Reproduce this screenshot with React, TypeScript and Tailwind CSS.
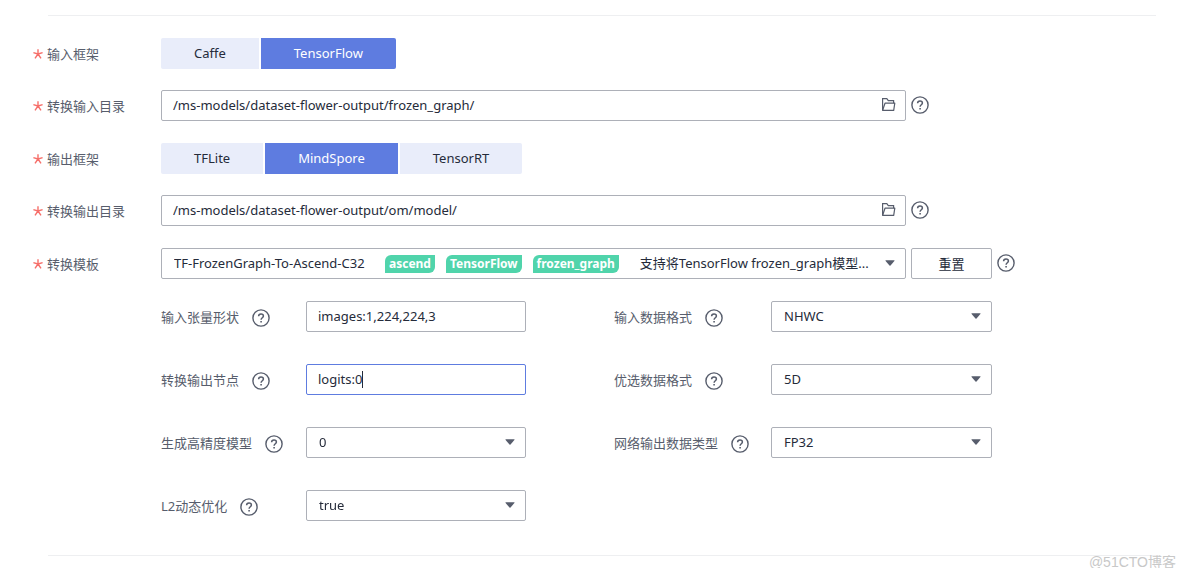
import { useState } from "react";
import type { ReactNode } from "react";

const fieldClass =
  "block h-[31px] w-full rounded-xs border border-[#adb0b8] bg-white pb-[2px] text-[13px] leading-5 text-[#252b3a] outline-none focus:border-[#5e7ce0]";

function HelpButton({ label, className }: { label: string; className: string }) {
  return (
    <button
      type="button"
      aria-label={`${label} help`}
      className={`block h-[18px] w-[18px] shrink-0 ${className}`}
    >
      <svg viewBox="0 0 18 18" className="h-[18px] w-[18px]" fill="none" stroke="#575d6c">
        <circle cx="9" cy="9" r="8.1" strokeWidth="1.4" />
        <path d="M6.6 7.3c0-1.5 1-2.4 2.4-2.4s2.4.9 2.4 2.1c0 1.7-2.3 1.8-2.3 3.7" strokeWidth="1.5" />
        <path d="M8.3 12.7h1.6" strokeWidth="1.6" />
      </svg>
    </button>
  );
}

function FolderIcon() {
  return (
    <svg viewBox="0 0 15 15" className="h-[15px] w-[15px]" fill="none" stroke="#575d6c" strokeWidth="1.2">
      <path d="M1.6 13.3V1.6h4.2l1.5 2h5.3v2.6" />
      <path d="M1.6 13.3 4 6.2h9.8l-1.1 7.1H1.6z" strokeLinejoin="round" />
    </svg>
  );
}

function Caret() {
  return (
    <svg
      viewBox="0 0 10 6"
      className="pointer-events-none absolute top-3 right-[11px] h-[6px] w-[10px]"
      fill="#575d6c"
    >
      <path d="M.8.3h8.4q.6.1.2.6L5.5 5.5q-.5.5-1 0L.6.9Q.2.4.8.3z" />
    </svg>
  );
}

interface RequiredRowProps {
  label: string;
  htmlFor?: string;
  className: string;
  children: ReactNode;
}

function RequiredRow({ label, htmlFor, className, children }: RequiredRowProps) {
  return (
    <div
      className={`grid grid-cols-[123px_minmax(0,1fr)_81px_18px] items-center gap-x-[5px] ${className}`}
    >
      <label htmlFor={htmlFor} className="flex items-center gap-1 text-[#575d6c]">
        <svg viewBox="0 0 10 10" className="h-[10px] w-[10px]" stroke="#f66f6a" strokeWidth="1.4">
          <path d="M5 .3V5M.4 3.7 5 5M9.6 3.7 5 5M2 9.4 5 5M8 9.4 5 5" />
        </svg>
        {label}
      </label>
      {children}
    </div>
  );
}

interface SegmentedProps {
  label: string;
  options: string[];
  initial: string;
}

function Segmented({ label, options, initial }: SegmentedProps) {
  const [value, setValue] = useState(initial);

  return (
    <RequiredRow label={label} className="mb-[21px]">
      <div role="group" aria-label={label} className="flex gap-[2px]">
        {options.map((option) => (
          <button
            key={option}
            type="button"
            aria-pressed={option === value}
            onClick={() => setValue(option)}
            className={`h-[31px] px-[33px] pb-[2px] first:rounded-l-xs last:rounded-r-xs ${
              option === value ? "bg-[#5e7ce0] text-white" : "bg-[#e9edfa] text-[#252b3a]"
            }`}
          >
            {option}
          </button>
        ))}
      </div>
    </RequiredRow>
  );
}

function DirectoryField({ id, label, path }: { id: string; label: string; path: string }) {
  return (
    <RequiredRow label={label} htmlFor={id} className="mb-[22px]">
      <div className="relative">
        <input id={id} type="text" defaultValue={path} className={`${fieldClass} px-[11px]`} />
        <button type="button" aria-label="Browse" className="absolute top-[7px] right-[10px]">
          <FolderIcon />
        </button>
      </div>
      <HelpButton label={label} className="mb-[2px]" />
    </RequiredRow>
  );
}

const tags = ["ascend", "TensorFlow", "frozen_graph"];

function TemplateField() {
  return (
    <RequiredRow label="转换模板" htmlFor="template" className="mb-[22px]">
      <div className="relative">
        <select id="template" className={`${fieldClass} appearance-none px-3`}>
          <option>TF-FrozenGraph-To-Ascend-C32</option>
        </select>
        <div className="pointer-events-none absolute inset-y-0 right-8 left-56 flex items-center">
          <div className="flex gap-[11px] text-xs">
            {tags.map((tag) => (
              <span
                key={tag}
                className="rounded-tl-md rounded-br-md bg-[#50d4ab] px-1 leading-[18px] font-bold text-white"
              >
                {tag}
              </span>
            ))}
          </div>
          <span className="ml-[21px] pb-[2px] whitespace-nowrap text-[#252b3a]">
            支持将TensorFlow frozen_graph模型...
          </span>
        </div>
        <Caret />
      </div>
      <button
        type="button"
        className="h-[31px] rounded-xs border border-[#adb0b8] bg-white text-[#252b3a]"
      >
        重置
      </button>
      <HelpButton label="转换模板" className="mb-[2px]" />
    </RequiredRow>
  );
}

interface Param {
  id: string;
  label: string;
  value: string;
  type: "text" | "select";
  focused?: boolean;
}

const leftParams: Param[] = [
  { id: "input-shape", label: "输入张量形状", value: "images:1,224,224,3", type: "text" },
  { id: "output-nodes", label: "转换输出节点", value: "logits:0", type: "text", focused: true },
  { id: "high-precision", label: "生成高精度模型", value: "0", type: "select" },
  { id: "l2-optimize", label: "L2动态优化", value: "true", type: "select" },
];

const rightParams: Param[] = [
  { id: "input-format", label: "输入数据格式", value: "NHWC", type: "select" },
  { id: "preferred-format", label: "优选数据格式", value: "5D", type: "select" },
  { id: "output-type", label: "网络输出数据类型", value: "FP32", type: "select" },
];

function ParamField({ param, labelWidth }: { param: Param; labelWidth: string }) {
  return (
    <div className="flex items-center">
      <div className={`flex shrink-0 items-center gap-[13px] ${labelWidth}`}>
        <label htmlFor={param.id} className="text-[#575d6c]">
          {param.label}
        </label>
        <HelpButton label={param.label} className="mt-[2px]" />
      </div>
      <div className="relative min-w-0 flex-1">
        {param.type === "text" ? (
          <>
            <input
              id={param.id}
              type="text"
              defaultValue={param.value}
              autoFocus={param.focused}
              className={`${fieldClass} px-[11px] caret-transparent`}
            />
            {param.focused && (
              <span className="pointer-events-none absolute top-[7px] left-14 h-[17px] w-px bg-[#252b3a]" />
            )}
          </>
        ) : (
          <>
            <select id={param.id} className={`${fieldClass} appearance-none px-3`}>
              <option>{param.value}</option>
            </select>
            <Caret />
          </>
        )}
      </div>
    </div>
  );
}

export default function App() {
  return (
    <main className="bg-white pt-[15px] font-['Noto_Sans','Noto_Sans_CJK_SC',sans-serif] text-[13px] leading-5">
      <hr className="mr-7 ml-12 border-[#eeeff1]" />
      <form className="pt-[22px] pr-[169px] pl-[33px]" onSubmit={(e) => e.preventDefault()}>
        <Segmented label="输入框架" options={["Caffe", "TensorFlow"]} initial="TensorFlow" />
        <DirectoryField
          id="input-dir"
          label="转换输入目录"
          path="/ms-models/dataset-flower-output/frozen_graph/"
        />
        <Segmented
          label="输出框架"
          options={["TFLite", "MindSpore", "TensorRT"]}
          initial="MindSpore"
        />
        <DirectoryField
          id="output-dir"
          label="转换输出目录"
          path="/ms-models/dataset-flower-output/om/model/"
        />
        <TemplateField />
        <div className="mr-[23px] ml-32 flex gap-[88px]">
          <div className="flex flex-[365] flex-col gap-8">
            {leftParams.map((param) => (
              <ParamField key={param.id} param={param} labelWidth="w-[145px]" />
            ))}
          </div>
          <div className="flex flex-[378] flex-col gap-8">
            {rightParams.map((param) => (
              <ParamField key={param.id} param={param} labelWidth="w-[157px]" />
            ))}
          </div>
        </div>
      </form>
      <hr className="mt-[34px] mr-7 ml-12 border-[#eeeff1]" />
      <footer className="pr-2 text-right font-['Liberation_Sans','Noto_Sans_CJK_SC',sans-serif] text-sm leading-3 text-[#c8c8c8]">
        @51CTO博客
      </footer>
    </main>
  );
}
